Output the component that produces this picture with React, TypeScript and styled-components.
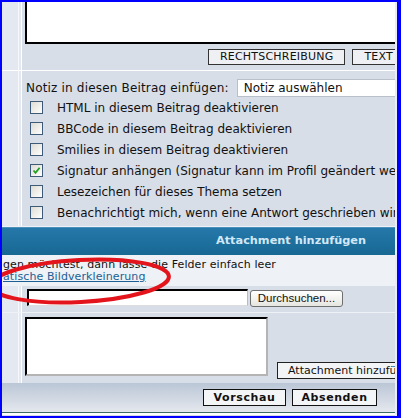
import React from "react";
import styled, { createGlobalStyle } from "styled-components";

const Global = createGlobalStyle`
  html, body { margin: 0; padding: 0; background: #0000fe; }
  body { font-family: "DejaVu Sans", Verdana, sans-serif; }
`;

const Frame = styled.div`
  position: relative;
  width: 401px;
  height: 418px;
  box-sizing: border-box;
  border-style: solid;
  border-color: #0000fe;
  border-width: 2px 4px 2px 2px;
  background: #0000fe;
  overflow: hidden;
`;

const Sheet = styled.div`
  height: 100%;
  box-sizing: border-box;
  border-right: 2px solid #e9edf3;
  display: flex;
  flex-direction: column;
  overflow: hidden;
  background: #d8dee8;
`;

const Row = styled.div<{ $h: number; $bg?: string }>`
  display: flex;
  height: ${(p) => p.$h}px;
  flex: none;
  background: ${(p) => p.$bg ?? "#d8dee8"};
  overflow: hidden;
`;

const Rule = styled.div<{ $c?: string; $h?: number }>`
  height: ${(p) => p.$h ?? 1}px;
  flex: none;
  background: ${(p) => p.$c ?? "#ffffff"};
`;

const SideCell = styled.div`
  width: 20px;
  flex: none;
  background: linear-gradient(
    90deg,
    #e4e8f0 0 16px,
    #f7f8fb 16px 17px,
    #e4e8f0 17px 19px,
    #ffffff 19px 20px
  );
`;

const Cell = styled.div<{ $pl?: number }>`
  flex: 1;
  min-width: 0;
  padding-left: ${(p) => p.$pl ?? 0}px;
  box-sizing: border-box;
`;

const MessageBox = styled.div`
  width: 420px;
  height: 40px;
  background: #ffffff;
  border-left: 2px solid #000;
  border-bottom: 2px solid #000;
`;

const ToolRow = styled.div`
  display: flex;
  gap: 7px;
  padding: 5px 0 0 186px;
`;

const FlatButton = styled.div`
  flex: none;
  height: 16px;
  box-sizing: border-box;
  border: 1px solid #333;
  background: #eef0f4;
  font-size: 11px;
  line-height: 14px;
  letter-spacing: 0.2px;
  color: #111;
  padding: 0 11px;
  white-space: nowrap;
`;

const OptionList = styled.div`
  display: flex;
  flex-direction: column;
  padding: 8px 0 0 4px;
  font-size: 12px;
  color: #111;
`;

const NoteLine = styled.div`
  display: flex;
  align-items: center;
  height: 18px;
  white-space: nowrap;
`;

const NoteLabel = styled.span`
  letter-spacing: 0.18px;
`;

const Select = styled.div`
  margin-left: 8px;
  height: 18px;
  width: 200px;
  box-sizing: border-box;
  border: 1px solid #b9c0ca;
  border-right: none;
  background: #ffffff;
  padding-left: 6px;
  line-height: 16px;
`;

const Option = styled.div`
  display: flex;
  align-items: center;
  height: 21px;
  white-space: nowrap;
`;

const Box = styled.span`
  width: 13px;
  height: 13px;
  box-sizing: border-box;
  margin: 0 14px 0 4px;
  border: 1px solid #3d5a78;
  background: linear-gradient(135deg, #dcdbd3 0%, #f0efea 55%, #ffffff 100%);
  display: inline-flex;
  align-items: center;
  justify-content: center;
  flex: none;
`;

const HeadBar = styled.div`
  height: 28px;
  flex: none;
  box-sizing: border-box;
  border-top: 1px solid #4b8fbb;
  background: linear-gradient(#2478a9, #186894);
  color: #d3e8f7;
  font-weight: bold;
  font-size: 11.3px;
  line-height: 26px;
  text-align: center;
  padding-left: 185px;
  white-space: nowrap;
`;

const Hint = styled.div`
  padding: 4px 0 0 1px;
  font-size: 11px;
  line-height: 12px;
  color: #111;
  white-space: nowrap;
  letter-spacing: 0.1px;
`;

const Link = styled.span`
  color: #1b5f96;
  text-decoration: underline;
`;

const FileRow = styled.div`
  display: flex;
  align-items: flex-start;
  gap: 2px;
  padding: 3px 0 0 5px;
`;

const FileField = styled.div`
  width: 221px;
  height: 17px;
  box-sizing: border-box;
  background: #fff;
  border-top: 2px solid #000;
  border-left: 2px solid #000;
  border-right: 1px solid #bbb;
  border-bottom: 1px solid #ddd;
`;

const Browse = styled.div`
  margin-top: 1px;
  width: 93px;
  height: 17px;
  box-sizing: border-box;
  border: 1px solid #6f6f6f;
  border-radius: 3px;
  background: linear-gradient(#ffffff, #e6e6e0);
  font-family: "Liberation Sans", Arial, sans-serif;
  font-size: 11.5px;
  line-height: 15px;
  text-align: center;
  color: #111;
`;

const AttachRow = styled.div`
  display: flex;
  align-items: flex-start;
  padding: 4px 0 0 3px;
`;

const CommentBox = styled.div`
  width: 243px;
  height: 59px;
  flex: none;
  box-sizing: border-box;
  background: #fff;
  border-top: 2px solid #000;
  border-left: 2px solid #000;
  border-right: 2px solid #b4b4b4;
  border-bottom: 2px solid #b4b4b4;
`;

const AttachButton = styled(FlatButton)`
  margin: 45px 0 0 9px;
  height: 17px;
  padding: 0 0 0 10px;
  font-size: 11px;
  line-height: 15px;
  letter-spacing: 0;
  background: #f3f4f6;
  border-color: #222;
`;

const FootBar = styled.div`
  height: 29px;
  flex: none;
  display: flex;
  gap: 6px;
  padding: 6px 0 0 201px;
  box-sizing: border-box;
  background: linear-gradient(#bac6d6, #e5e8ee);
`;

const SubmitButton = styled.div<{ $w: number }>`
  width: ${(p) => p.$w}px;
  height: 17px;
  box-sizing: border-box;
  border: 1px solid #111;
  background: #f4f5f7;
  font-weight: bold;
  font-size: 11px;
  line-height: 15px;
  letter-spacing: 0.6px;
  text-align: center;
  color: #111;
`;

const Overlay = styled.svg`
  position: absolute;
  left: -2px;
  top: -2px;
  pointer-events: none;
`;

const Check = () => (
  <svg width="9" height="9" viewBox="0 0 9 9">
    <path d="M1.5 4.5 L3.5 6.8 L7.6 1.8" fill="none" stroke="#21a121" strokeWidth="1.8" />
  </svg>
);

const options = [
  { label: "HTML in diesem Beitrag deaktivieren", on: false },
  { label: "BBCode in diesem Beitrag deaktivieren", on: false },
  { label: "Smilies in diesem Beitrag deaktivieren", on: false },
  { label: "Signatur anhängen (Signatur kann im Profil geändert werden)", on: true },
  { label: "Lesezeichen für dieses Thema setzen", on: false },
  { label: "Benachrichtigt mich, wenn eine Antwort geschrieben wird", on: false },
];

export default function App() {
  return (
    <>
      <Global />
      <Frame>
        <Sheet>
          <Row $h={42}>
            <SideCell />
            <Cell $pl={3}>
              <MessageBox />
            </Cell>
          </Row>
          <Row $h={26}>
            <SideCell />
            <Cell>
              <ToolRow>
                <FlatButton>RECHTSCHREIBUNG</FlatButton>
                <FlatButton>TEXT</FlatButton>
              </ToolRow>
            </Cell>
          </Row>
          <Rule />
          <Row $h={155}>
            <SideCell />
            <Cell>
              <OptionList>
                <NoteLine>
                  <NoteLabel>Notiz in diesen Beitrag einfügen:</NoteLabel>
                  <Select>Notiz auswählen</Select>
                </NoteLine>
                {options.map((o) => (
                  <Option key={o.label}>
                    <Box>{o.on && <Check />}</Box>
                    {o.label}
                  </Option>
                ))}
              </OptionList>
            </Cell>
          </Row>
          <Rule $c="#eef1f6" />
          <HeadBar>Attachment hinzufügen</HeadBar>
          <Row $h={31} $bg="#eef1f5">
            <Hint>
              gen möchtest, dann lasse die Felder einfach leer
              <br />
              <Link>atische Bildverkleinerung</Link>
            </Hint>
          </Row>
          <Row $h={26}>
            <SideCell />
            <Cell>
              <FileRow>
                <FileField />
                <Browse>Durchsuchen...</Browse>
              </FileRow>
            </Cell>
          </Row>
          <Rule $c="#eef1f6" />
          <Row $h={70}>
            <SideCell />
            <Cell>
              <AttachRow>
                <CommentBox />
                <AttachButton>Attachment hinzufügen</AttachButton>
              </AttachRow>
            </Cell>
          </Row>
          <FootBar>
            <SubmitButton $w={83}>Vorschau</SubmitButton>
            <SubmitButton $w={85}>Absenden</SubmitButton>
          </FootBar>
          <Rule $c="#3b6b63" />
          <Rule $h={2} />
        </Sheet>
        <Overlay width="401" height="418" viewBox="0 0 401 418">
          <ellipse
            cx="80"
            cy="281"
            rx="89"
            ry="21"
            transform="rotate(-3 80 281)"
            fill="none"
            stroke="#e3141b"
            strokeWidth="4"
          />
        </Overlay>
      </Frame>
    </>
  );
}
